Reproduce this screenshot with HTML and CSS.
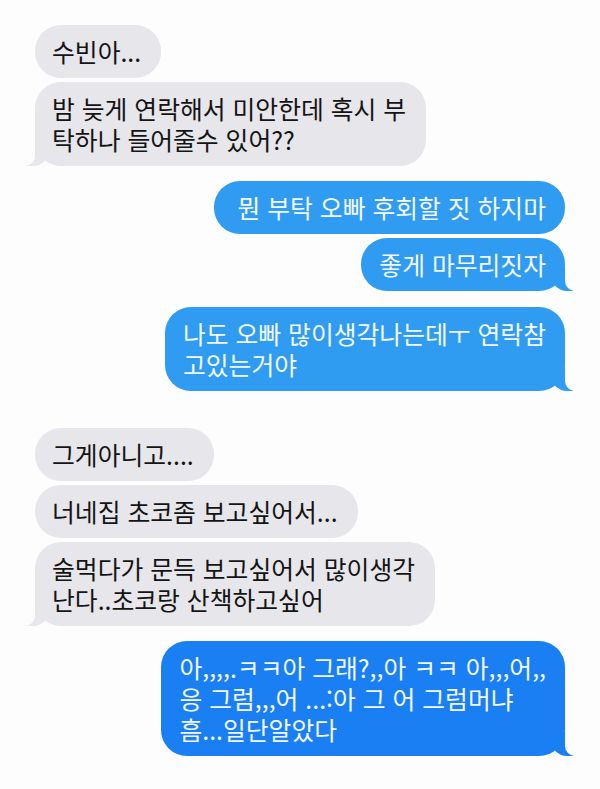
FILE: index.html
```html
<!DOCTYPE html>
<html lang="ko">
<head>
    <meta charset="UTF-8">
    <meta name="viewport" content="width=device-width, initial-scale=1.0">
    <title>messages</title>
    <link rel="stylesheet" href="styles.css">
</head>

<body>
    <div class="chat">
        <div class="chat_group">
            <div class="bubble received">수빈아...</div>
            <div class="bubble received tail">밤 늦게 연락해서 미안한데 혹시 부<br>탁하나 들어줄수 있어??</div>
        </div>

        <div class="chat_group sent_group">
            <div class="bubble sent light wide">뭔 부탁 오빠 후회할 짓 하지마</div>
            <div class="bubble sent light tail">좋게 마무리짓자</div>
        </div>

        <div class="chat_group sent_group gap_small">
            <div class="bubble sent light tail">나도 오빠 많이생각나는데ㅜ 연락참<br>고있는거야</div>
        </div>

        <div class="chat_group gap_big">
            <div class="bubble received">그게아니고....</div>
            <div class="bubble received">너네집 초코좀 보고싶어서...</div>
            <div class="bubble received tail">술먹다가 문득 보고싶어서 많이생각<br>난다..초코랑 산책하고싶어</div>
        </div>

        <div class="chat_group sent_group">
            <div class="bubble sent dark tail">아,,,,.ㅋㅋ아 그래?,,아 ㅋㅋ 아,,,어,,<br>응 그럼,,,어 ...:아 그 어 그럼머냐<br>흠...일단알았다</div>
        </div>
    </div>
</body>
</html>
```

FILE: styles.css
```css
* {
    margin: 0;
    padding: 0;
    box-sizing: border-box;
}

body {
    background: #fdfdfd;
    font-family: "Noto Sans CJK KR", "Noto Sans", sans-serif;
}

.chat {
    display: flex;
    flex-direction: column;
    gap: 15px;
    padding: 25px 35px 0 35px;
}

.chat_group {
    display: flex;
    flex-direction: column;
    align-items: flex-start;
    gap: 4px;
}

.sent_group {
    align-items: flex-end;
}

.gap_small {
    margin-top: 1px;
}

.gap_big {
    margin-top: 22px;
}

.bubble {
    position: relative;
    font-size: 24.8px;
    line-height: 31px;
    padding: 11px 20px 11px 17px;
    border-radius: 26px;
}

.received {
    background: #e6e6eb;
    color: #141414;
}

.sent {
    color: #f4f9ff;
    padding: 11px 19px 11px 18px;
}

.sent.wide {
    padding-left: 24px;
}

.light {
    background: #2f9cf1;
}

.dark {
    background: #1a7ff3;
}

/* little tails on the last bubble of a group */
.tail::before,
.tail::after {
    content: "";
    position: absolute;
    bottom: 0;
    height: 24px;
}

.received.tail::before {
    left: -9px;
    width: 23px;
    background: #e6e6eb;
    border-bottom-right-radius: 16px;
}

.received.tail::after {
    left: -26px;
    width: 26px;
    background: #fdfdfd;
    border-bottom-right-radius: 10px;
}

.sent.tail::before {
    right: -8px;
    width: 22px;
    background: inherit;
    border-bottom-left-radius: 16px;
}

.sent.tail::after {
    right: -26px;
    width: 26px;
    background: #fdfdfd;
    border-bottom-left-radius: 10px;
}
```
